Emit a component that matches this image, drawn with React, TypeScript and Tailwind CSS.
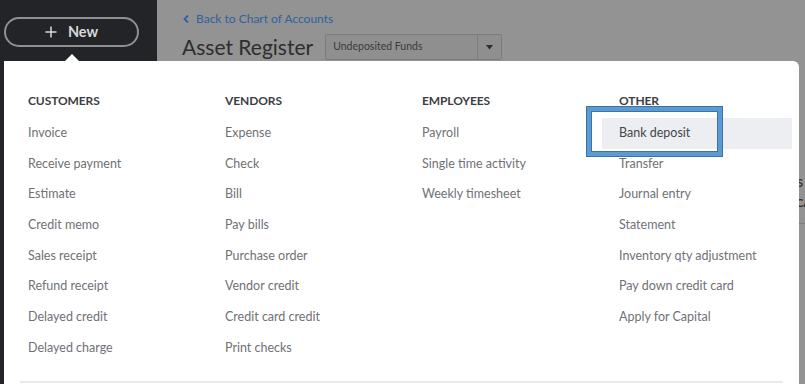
import React from "react";

const cols: { title: string; items: string[] }[] = [
  {
    title: "CUSTOMERS",
    items: [
      "Invoice",
      "Receive payment",
      "Estimate",
      "Credit memo",
      "Sales receipt",
      "Refund receipt",
      "Delayed credit",
      "Delayed charge",
    ],
  },
  {
    title: "VENDORS",
    items: [
      "Expense",
      "Check",
      "Bill",
      "Pay bills",
      "Purchase order",
      "Vendor credit",
      "Credit card credit",
      "Print checks",
    ],
  },
  {
    title: "EMPLOYEES",
    items: ["Payroll", "Single time activity", "Weekly timesheet"],
  },
  {
    title: "OTHER",
    items: [
      "Bank deposit",
      "Transfer",
      "Journal entry",
      "Statement",
      "Inventory qty adjustment",
      "Pay down credit card",
      "Apply for Capital",
    ],
  },
];

export default function App() {
  return (
    <div
      className="relative w-[805px] h-[384px] overflow-hidden flex"
      style={{ fontFamily: "Lato, 'Open Sans', sans-serif" }}
    >
      {/* Sidebar */}
      <div className="w-[157px] shrink-0 bg-[#232427] pt-[17px] pl-[4px]">
        <div className="w-[135px] h-[30px] rounded-full border-2 border-[#8e9094] flex items-center justify-center gap-[11px] text-[#d6d8dc]">
          <svg width="12" height="12" viewBox="0 0 12 12">
            <path d="M6 0.5V11.5M0.5 6H11.5" stroke="#d6d8dc" strokeWidth="1.5" />
          </svg>
          <span className="text-[14.5px] font-bold leading-none">New</span>
        </div>
      </div>

      {/* Main (dimmed) */}
      <div className="flex-1 bg-[#939393] pl-[25px] pt-[11px]">
        <div className="flex items-center gap-[6px] text-[12px] text-[#2e62a0] leading-[16px]">
          <svg width="8" height="10" viewBox="0 0 8 10">
            <path d="M6 1.5L2.5 5L6 8.5" stroke="#2e62a0" strokeWidth="1.8" fill="none" />
          </svg>
          <span>Back to Chart of Accounts</span>
        </div>
        <div className="flex items-center mt-[5px] gap-[12px]">
          <span className="text-[21px] text-[#2d2e30] leading-[30px]">Asset Register</span>
          <div className="w-[177px] h-[26px] border border-[#7c7c7c] bg-[#8f8f8f] rounded-[2px] flex items-center">
            <span className="flex-1 pl-[7px] text-[10.5px] text-[#3a3a3a]">Undeposited Funds</span>
            <div className="w-[24px] h-full border-l border-[#7c7c7c] flex items-center justify-center">
              <svg width="7" height="5" viewBox="0 0 7 5">
                <path d="M0 0H7L3.5 4.5Z" fill="#2d2d2d" />
              </svg>
            </div>
          </div>
        </div>
        <div className="mt-[111px] flex justify-end text-[11px] font-bold text-[#333] leading-[20px]">
          <div className="w-[10px] overflow-hidden">
            <div className="pl-[2px]">S</div>
            <div className="pl-[1px]">CA</div>
          </div>
        </div>
        <div className="mt-[10px] h-px bg-[#7d7d7d]" />
      </div>

      {/* Caret */}
      <div className="absolute left-[65px] top-[54px] w-0 h-0 border-l-[7px] border-r-[7px] border-b-[7px] border-l-transparent border-r-transparent border-b-white" />

      {/* Popup */}
      <div className="absolute left-[4px] top-[61px] w-[795px] h-[340px] bg-white rounded-tr-[6px] pt-[24px] px-[7px]">
        <div className="grid grid-cols-[197px_197px_197px_190px]">
          {cols.map((c) => (
            <div key={c.title} className="flex flex-col">
              <div className="h-[33px] pl-[17px] flex items-center pb-[1px] text-[12px] font-bold text-[#3d3e42] tracking-[-0.1px]">
                {c.title}
              </div>
              {c.items.map((it) => (
                <div
                  key={it}
                  className={`h-[30.7px] pl-[17px] flex items-center text-[12.5px] ${
                    it === "Bank deposit" ? "bg-[#eceef1] text-[#45464a]" : "text-[#707176]"
                  }`}
                >
                  {it}
                </div>
              ))}
            </div>
          ))}
        </div>
        <div className="mt-[17px] mx-[9px] h-[2px] bg-[#e8e9eb]" />
      </div>

      {/* Annotation box */}
      <div className="absolute left-[587px] top-[107px] w-[135px] h-[49px] border-[4px] border-[#5b9bd5] outline outline-1 outline-[#41719c] shadow-[inset_0_0_0_1px_#41719c]" />
    </div>
  );
}
